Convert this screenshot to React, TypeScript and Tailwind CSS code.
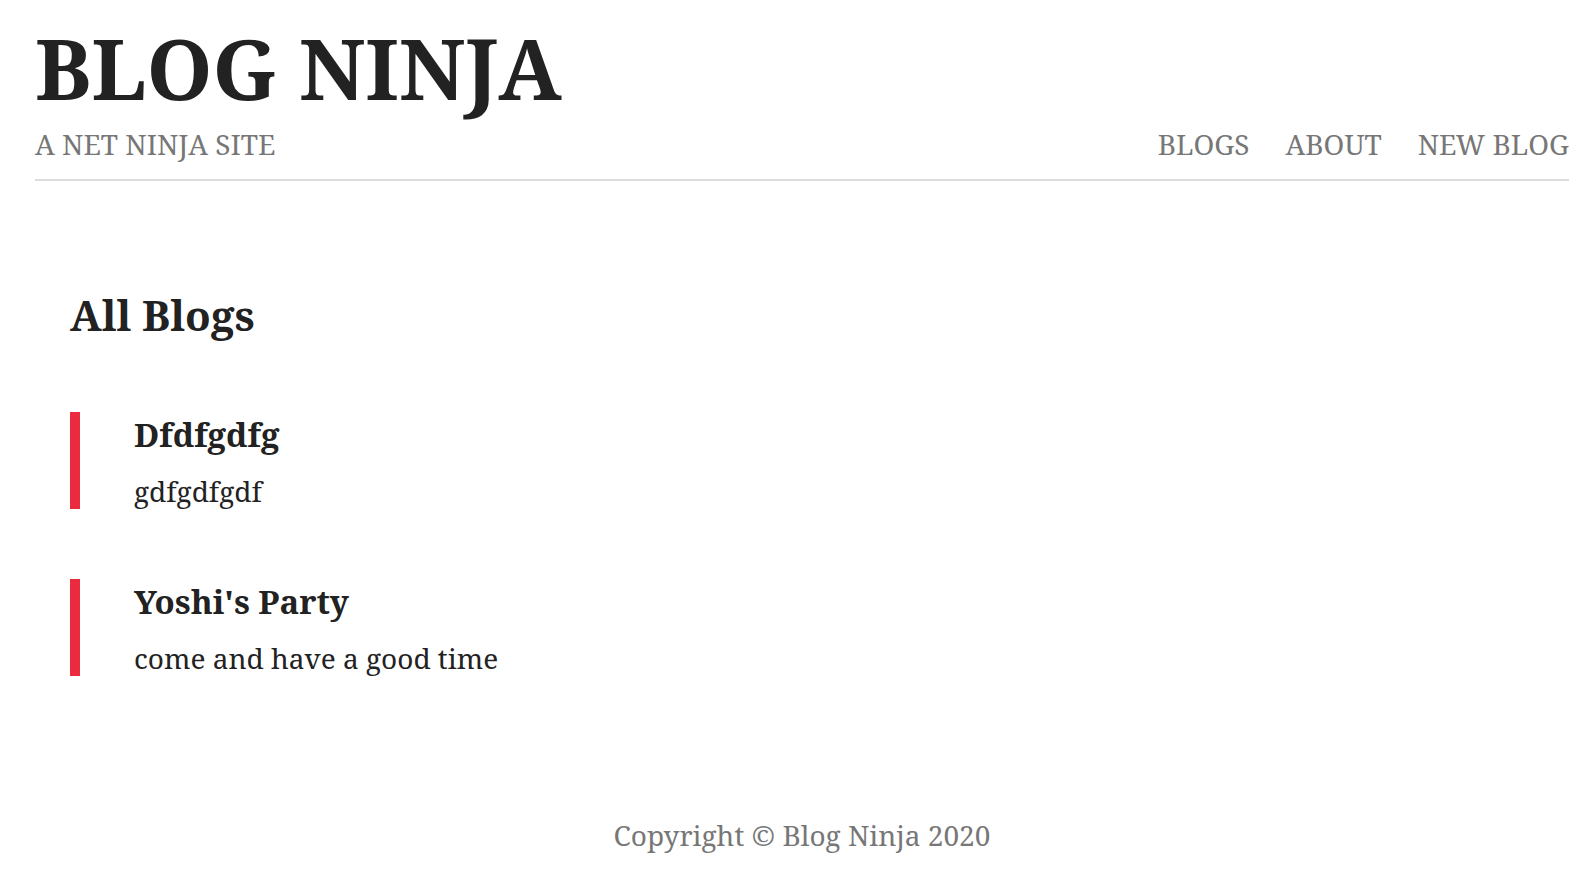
import React from 'react';

const blogs = [
  { title: 'Dfdfgdfg', snippet: 'gdfgdfgdf' },
  { title: "Yoshi's Party", snippet: 'come and have a good time' },
];

const App = () => {
  return (
    <div
      className="min-h-screen bg-white pl-[35px] pr-[20px] text-[#222]"
      style={{ fontFamily: '"Noto Serif", "DejaVu Serif", serif' }}
    >
      <nav className="flex items-end justify-between border-b-2 border-[#ddd] pb-[17px] pt-[18px] uppercase">
        <div>
          <h1 className="text-[84px] font-bold leading-[100px] text-[#222]">Blog Ninja</h1>
          <p className="mt-[8px] text-[28px] leading-[36px] text-[#777]">A Net Ninja Site</p>
        </div>
        <ul className="flex gap-[36px] text-[28px] leading-[36px] text-[#777]">
          <li>Blogs</li>
          <li>About</li>
          <li>New Blog</li>
        </ul>
      </nav>

      <div className="pl-[35px]">
        <h2 className="mt-[106px] text-[42px] font-bold leading-[56px]">All Blogs</h2>
        <div className="mt-[69px] flex flex-col gap-[70px]">
          {blogs.map((b) => (
            <div key={b.title} className="h-[97px] border-l-[10px] border-[#eb2a3f] pl-[54px]">
              <h3 className="text-[33px] font-bold leading-[46px]">{b.title}</h3>
              <p className="mt-[18px] text-[28px] leading-[31px]">{b.snippet}</p>
            </div>
          ))}
        </div>
      </div>

      <footer className="mt-[141px] text-center text-[28px] leading-[36px] text-[#777]">
        Copyright © Blog Ninja 2020
      </footer>
    </div>
  );
};

export default App;
